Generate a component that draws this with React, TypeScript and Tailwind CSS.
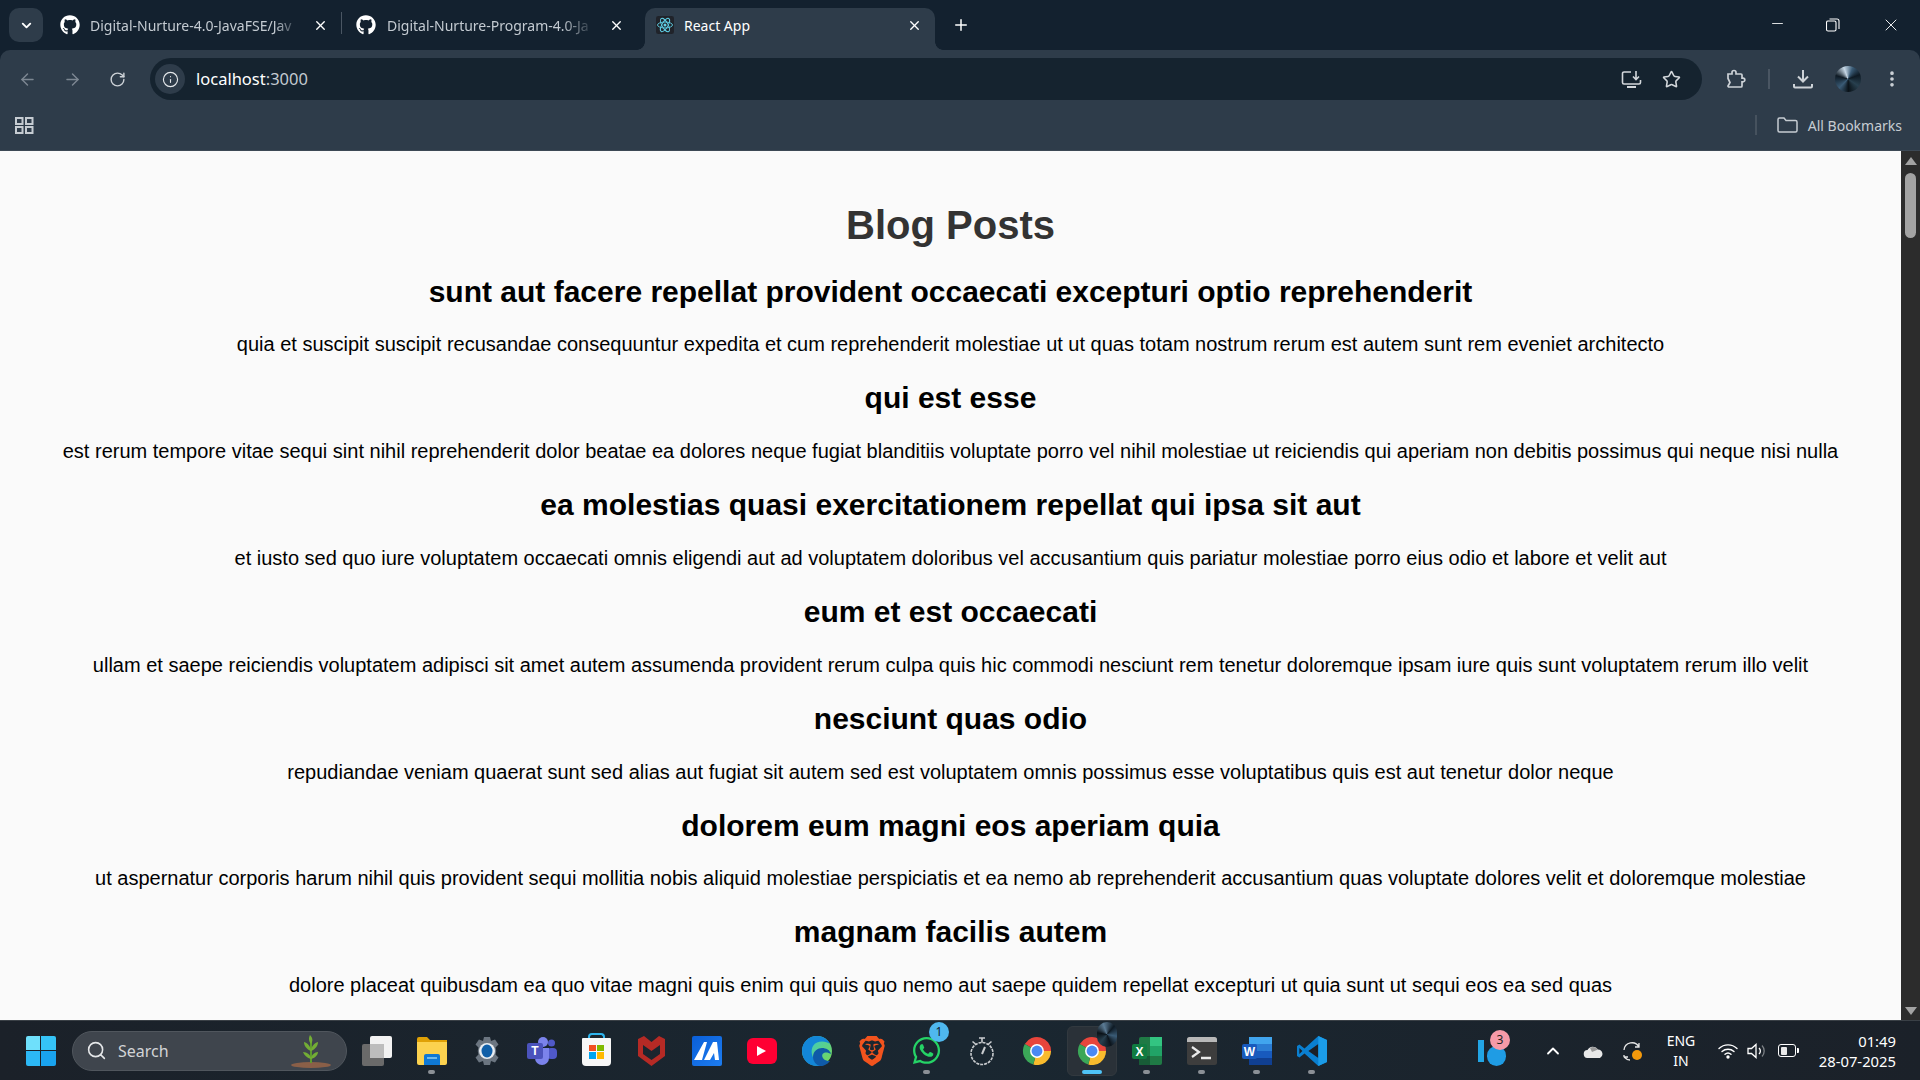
import React from "react";
import { ArrowLeft, ArrowRight, RotateCw, Info, Star, MoreVertical, X, Plus, ChevronDown, ChevronUp, Minus, Search } from "lucide-react";
import { FaGithub, FaWhatsapp } from "react-icons/fa";
import { SiBrave } from "react-icons/si";

const posts = [
  ["sunt aut facere repellat provident occaecati excepturi optio reprehenderit", "quia et suscipit suscipit recusandae consequuntur expedita et cum reprehenderit molestiae ut ut quas totam nostrum rerum est autem sunt rem eveniet architecto"],
  ["qui est esse", "est rerum tempore vitae sequi sint nihil reprehenderit dolor beatae ea dolores neque fugiat blanditiis voluptate porro vel nihil molestiae ut reiciendis qui aperiam non debitis possimus qui neque nisi nulla"],
  ["ea molestias quasi exercitationem repellat qui ipsa sit aut", "et iusto sed quo iure voluptatem occaecati omnis eligendi aut ad voluptatem doloribus vel accusantium quis pariatur molestiae porro eius odio et labore et velit aut"],
  ["eum et est occaecati", "ullam et saepe reiciendis voluptatem adipisci sit amet autem assumenda provident rerum culpa quis hic commodi nesciunt rem tenetur doloremque ipsam iure quis sunt voluptatem rerum illo velit"],
  ["nesciunt quas odio", "repudiandae veniam quaerat sunt sed alias aut fugiat sit autem sed est voluptatem omnis possimus esse voluptatibus quis est aut tenetur dolor neque"],
  ["dolorem eum magni eos aperiam quia", "ut aspernatur corporis harum nihil quis provident sequi mollitia nobis aliquid molestiae perspiciatis et ea nemo ab reprehenderit accusantium quas voluptate dolores velit et doloremque molestiae"],
  ["magnam facilis autem", "dolore placeat quibusdam ea quo vitae magni quis enim qui quis quo nemo aut saepe quidem repellat excepturi ut quia sunt ut sequi eos ea sed quas"],
];

function ReactIcon() {
  return (
    <svg width="18" height="18" viewBox="0 0 24 24" fill="none" stroke="#5fd0e6" strokeWidth="1.2">
      <rect width="24" height="24" rx="3" fill="#20232a" stroke="none" />
      <circle cx="12" cy="12" r="2" fill="#5fd0e6" stroke="none" />
      <ellipse cx="12" cy="12" rx="10" ry="4" />
      <ellipse cx="12" cy="12" rx="10" ry="4" transform="rotate(60 12 12)" />
      <ellipse cx="12" cy="12" rx="10" ry="4" transform="rotate(120 12 12)" />
    </svg>
  );
}

function TabBar() {
  return (
    <div className="h-[50px] flex items-end bg-[#13212f] text-[14px] shrink-0">
      <div className="w-[34px] h-[34px] ml-[9px] mb-[8px] rounded-[10px] bg-[#2e3c4a] flex items-center justify-center text-white">
        <ChevronDown size={15} strokeWidth={3} />
      </div>
      <div className="w-[300px] h-[42px] flex items-center pl-[17px] pb-[8px] text-[#c3cad1] relative">
        <FaGithub size={20} className="text-white shrink-0" />
        <span className="ml-[10px] w-[210px] overflow-hidden whitespace-nowrap [mask-image:linear-gradient(to_right,black_88%,transparent)]">Digital-Nurture-4.0-JavaFSE/Jav</span>
        <X size={15} strokeWidth={2.2} className="ml-[13px] text-white shrink-0" />
        <div className="absolute right-[1px] top-[4px] w-[1px] h-[22px] bg-[#4a5663]" />
      </div>
      <div className="w-[302px] h-[42px] flex items-center pl-[13px] pb-[8px] text-[#c3cad1]">
        <FaGithub size={20} className="text-white shrink-0" />
        <span className="ml-[11px] w-[208px] overflow-hidden whitespace-nowrap [mask-image:linear-gradient(to_right,black_84%,transparent)]">Digital-Nurture-Program-4.0-Ja</span>
        <X size={15} strokeWidth={2.2} className="ml-[14px] text-white shrink-0" />
      </div>
      <div className="w-[290px] h-[42px] flex items-center pl-[11px] pb-[8px] bg-[#2e3c4a] rounded-t-[10px] text-white relative">
        <div className="absolute left-[-8px] bottom-0 w-[8px] h-[8px] bg-[radial-gradient(circle_at_0_0,transparent_7.5px,#2e3c4a_8px)]" />
        <div className="absolute right-[-8px] bottom-0 w-[8px] h-[8px] bg-[radial-gradient(circle_at_100%_0,transparent_7.5px,#2e3c4a_8px)]" />
        <ReactIcon />
        <span className="ml-[10px] flex-1 whitespace-nowrap">React App</span>
        <X size={15} strokeWidth={2.2} className="mr-[13px] text-white shrink-0" />
      </div>
      <div className="h-[42px] flex items-center pb-[8px] ml-[17px] text-white">
        <Plus size={18} strokeWidth={2} />
      </div>
      <div className="ml-auto h-[50px] flex items-center text-white">
        <Minus size={17} strokeWidth={1.2} className="mr-[40px] mb-[4px]" />
        <svg width="14" height="14" viewBox="0 0 14 14" fill="none" stroke="white" strokeWidth="1.1" className="mr-[41px]">
          <rect x="0.5" y="3" width="9.5" height="10" rx="1.5" />
          <path d="M3.5 1h7.5a2 2 0 0 1 2 2v8" />
        </svg>
        <X size={20} strokeWidth={1.1} className="mr-[19px]" />
      </div>
    </div>
  );
}

function Toolbar() {
  return (
    <div className="bg-[#2e3c4a] shrink-0 h-[101px] rounded-tr-[10px] rounded-tl-[10px] border-b border-[#3c4854]">
      <div className="h-[50px] flex items-start pt-[8px]">
        <div className="h-[42px] flex items-center pl-[18px] text-[#7d8792]">
          <ArrowLeft size={19} strokeWidth={1.8} />
          <ArrowRight size={19} strokeWidth={1.8} className="ml-[26px]" />
          <RotateCw size={17} strokeWidth={2} className="ml-[27px] text-[#cdd2d7]" />
        </div>
        <div className="ml-[24px] h-[42px] w-[1552px] rounded-full bg-[#15232f] flex items-center pl-[5px] pr-[21px]">
          <div className="w-[30px] h-[30px] rounded-full bg-[#2e3c4a] flex items-center justify-center text-[#e4e7ea]">
            <Info size={17} strokeWidth={1.6} />
          </div>
          <span className="ml-[11px] text-[16.5px] text-white font-['Noto_Sans',sans-serif]">localhost<span className="text-[#c3cad1]">:3000</span></span>
          <svg width="21" height="20" viewBox="0 0 21 20" fill="none" stroke="#d3d7db" strokeWidth="1.6" className="ml-auto">
            <path d="M10 3H3a1.5 1.5 0 0 0-1.5 1.5v9A1.5 1.5 0 0 0 3 15h15a1.5 1.5 0 0 0 1.5-1.5V11" />
            <path d="M6 18h9" strokeWidth="2" />
            <path d="M15 2v8M12 7.5l3 3 3-3" />
          </svg>
          <Star size={19} strokeWidth={2} className="ml-[20px] text-[#d3d7db]" />
        </div>
        <div className="h-[42px] flex items-center text-[#cdd2d7]">
          <svg width="20" height="20" viewBox="0 0 20 20" fill="none" stroke="#cdd2d7" strokeWidth="1.7" className="ml-[24px]">
            <path d="M2 5h4V3.5a2 2 0 0 1 4 0V5h5a1 1 0 0 1 1 1v3.2h1a1.8 1.8 0 0 1 0 3.6h-1V17a1 1 0 0 1-1 1H3a1 1 0 0 1-1-1l2-3.5L2 9.5z" />
          </svg>
          <div className="w-[2px] h-[20px] bg-[#4a5663] ml-[22px]" />
          <svg width="22" height="22" viewBox="0 0 22 22" fill="none" stroke="#cdd2d7" strokeWidth="2" className="ml-[22px]">
            <path d="M11 2v11M6 8.5l5 5 5-5" />
            <path d="M2 16v2.5a1 1 0 0 0 1 1h16a1 1 0 0 0 1-1V16" />
          </svg>
          <div className="w-[26px] h-[26px] rounded-full ml-[21px] bg-[conic-gradient(from_-20deg,#c7d8e6,#3a5b76_12%,#0e1a24_25%,#28404f_40%,#0a1218_55%,#3a5b76_68%,#0e1a24_85%,#c7d8e6)]" />
          <MoreVertical size={20} strokeWidth={2.4} className="ml-[21px]" />
        </div>
      </div>
      <div className="h-[50px] flex items-center pl-[15px] pr-[18px] text-[#c6ccd2]">
        <svg width="19" height="17" viewBox="0 0 19 17" fill="none" stroke="#c6ccd2" strokeWidth="2">
          <rect x="1" y="1" width="6.5" height="6" />
          <rect x="11" y="1" width="6.5" height="6" />
          <rect x="1" y="10" width="6.5" height="6" />
          <rect x="11" y="10" width="6.5" height="6" />
        </svg>
        <div className="ml-auto w-[2px] h-[20px] bg-[#46525e]" />
        <svg width="21" height="16" viewBox="0 0 21 16" fill="none" stroke="#c6ccd2" strokeWidth="1.5" className="ml-[20px]">
          <path d="M1 2.5A1.5 1.5 0 0 1 2.5 1H7l2 2.5h9.5A1.5 1.5 0 0 1 20 5v8.5a1.5 1.5 0 0 1-1.5 1.5h-16A1.5 1.5 0 0 1 1 13.5z" />
        </svg>
        <span className="ml-[10px] font-['Noto_Sans',sans-serif] text-[14px]">All Bookmarks</span>
      </div>
    </div>
  );
}

function Page() {
  return (
    <div className="flex-1 min-h-0 flex">
      <main className="flex-1 min-w-0 overflow-hidden bg-[#fafafa] pt-[24px] px-[25px] text-center font-['Liberation_Sans',Arial,sans-serif]">
        <h1 className="text-[40px] leading-[46px] font-bold text-[#333333] my-[26.8px]">Blog Posts</h1>
        {posts.map(([t, b]) => (
          <div key={t}>
            <h2 className="text-[30px] leading-[34px] font-bold text-black my-[24.9px]">{t}</h2>
            <p className="text-[20px] leading-[23px] text-black my-[20px]">{b}</p>
          </div>
        ))}
      </main>
      <div className="w-[19px] bg-[#2c2c2c] flex flex-col items-center shrink-0">
        <div className="mt-[6px] w-0 h-0 border-l-[6.5px] border-r-[6.5px] border-b-[8px] border-l-transparent border-r-transparent border-b-[#a3a3a3]" />
        <div className="mt-[8px] w-[11px] h-[65px] rounded-full bg-[#a3a3a3]" />
        <div className="mt-auto mb-[5px] w-0 h-0 border-l-[6.5px] border-r-[6.5px] border-t-[8px] border-l-transparent border-r-transparent border-t-[#a3a3a3]" />
      </div>
    </div>
  );
}

function Chrome({ size = 30 }: { size?: number }) {
  return (
    <svg width={size} height={size} viewBox="0 0 32 32">
      <path d="M16 16 L3 8.5 A15 15 0 0 1 31 16 Z" fill="#e8453c" />
      <path d="M16 16 L31 16 A15 15 0 0 1 12 30.5 Z" fill="#f9bb2d" />
      <path d="M16 16 L12 30.5 A15 15 0 0 1 3 8.5 Z" fill="#3ba758" />
      <circle cx="16" cy="16" r="7.4" fill="#fff" />
      <circle cx="16" cy="16" r="5.8" fill="#4a89f3" />
    </svg>
  );
}

function Slot({ children, dot, active }: { children: React.ReactNode; dot?: boolean; active?: boolean }) {
  return (
    <div className="w-[55px] h-[50px] relative flex items-center justify-center shrink-0">
      {active && <div className="absolute left-[3px] right-[2px] top-0 bottom-0 rounded-[6px] bg-[#2a3138] border border-[#32393f]" />}
      <div className="relative flex items-center justify-center">{children}</div>
      {dot && <div className="absolute left-[24px] bottom-[2px] w-[7px] h-[4px] rounded-full bg-[#8b9096]" />}
      {active && <div className="absolute left-[18px] bottom-[2px] w-[20px] h-[4px] rounded-full bg-[#4fc3f7]" />}
    </div>
  );
}

function Taskbar() {
  return (
    <div className="h-[60px] shrink-0 border-t border-[#3a4046] bg-[linear-gradient(to_right,#1b2129,#1a2731_50%,#1b2129)] flex items-center text-white font-['Noto_Sans',sans-serif]">
      <div className="ml-[13px] w-[55px] flex items-center justify-center">
        <div className="w-[30px] h-[30px] grid grid-cols-2 grid-rows-2 gap-[1.5px]">
          <div className="rounded-tl-[2px] bg-[#6fe0fb]" />
          <div className="rounded-tr-[2px] bg-[#35c3f6]" />
          <div className="rounded-bl-[2px] bg-[#2cb8f5]" />
          <div className="rounded-br-[2px] bg-[#19a3ef]" />
        </div>
      </div>
      <div className="ml-[4px] w-[275px] h-[40px] rounded-full bg-[#3f454d] border border-[#50565d] flex items-center pl-[13px] pr-[12px]">
        <Search size={21} strokeWidth={1.8} className="text-[#e5e7e9]" />
        <span className="ml-[11px] text-[16px] text-[#d2d4d6]">Search</span>
        <svg width="46" height="34" viewBox="0 0 46 34" className="ml-auto">
          <ellipse cx="23" cy="31" rx="20" ry="3" fill="#8a5f48" />
          <path d="M23 29 V8" stroke="#5e9a2f" strokeWidth="2" />
          <path d="M23 10 C20 6 21 3 22 1 C25 4 25 7 23 10Z M23 17 C18 15 16 11 16 8 C20 9 23 13 23 17Z M23 17 C28 15 30 11 30 8 C26 9 23 13 23 17Z M23 25 C19 24 16 21 15 18 C19 18 23 21 23 25Z M23 25 C27 24 30 21 30 18 C27 18 23 21 23 25Z" fill="#73ad35" />
        </svg>
      </div>
      <div className="ml-[2px] flex items-center">
        <Slot>
          <div className="relative w-[30px] h-[30px]">
            <div className="absolute left-0 bottom-0 w-[22px] h-[22px] rounded-[2px] bg-[#6a6a6a]" />
            <div className="absolute right-0 top-0 w-[22px] h-[22px] rounded-[2px] bg-[#f2f2f2]" />
            <div className="absolute left-[8px] top-[8px] w-[14px] h-[14px] bg-[#bdbdbd]" />
          </div>
        </Slot>
        <Slot dot>
          <svg width="30" height="28" viewBox="0 0 30 28">
            <path d="M0 2a2 2 0 0 1 2-2h8l3 3h17v6H0z" fill="#e0a106" />
            <path d="M0 5h30v21a2 2 0 0 1-2 2H2a2 2 0 0 1-2-2z" fill="#fcd24f" />
            <path d="M7 19a2 2 0 0 1 2-2h12a2 2 0 0 1 2 2v9H7z" fill="#0f78d4" />
            <path d="M10 21h10" stroke="#8fd0f5" strokeWidth="1.5" />
          </svg>
        </Slot>
        <Slot>
          <svg width="30" height="30" viewBox="0 0 30 30">
            <path d="M12 1h6l1 4 4-1.500 3.500 5-3 3a9 9 0 0 1 0 7l3 3-3.500 5-4-1.500-1 4h-6l-1-4-4 1.500-3.500-5 3-3a9 9 0 0 1 0-7l-3-3L7 3.500 11 5z" fill="#6b7580" />
            <circle cx="15" cy="15" r="8" fill="#e8edf1" />
            <ellipse cx="15" cy="15" rx="5.500" ry="6.500" fill="#0f5fa8" />
          </svg>
        </Slot>
        <Slot>
          <svg width="30" height="28" viewBox="0 0 30 28">
            <circle cx="24.500" cy="6" r="3.500" fill="#5059c9" />
            <rect x="20" y="11" width="10" height="11" rx="4" fill="#5059c9" />
            <circle cx="16" cy="5" r="5" fill="#7b83eb" />
            <path d="M8 11h14v10a7 7 0 0 1-14 0z" fill="#7b83eb" />
            <rect x="0" y="6" width="16" height="16" rx="2" fill="#4b53bc" />
            <text x="8" y="18" textAnchor="middle" fontSize="12" fontWeight="700" fill="white" fontFamily="Liberation Sans">T</text>
          </svg>
        </Slot>
        <Slot>
          <div className="relative w-[29px] h-[33px] mt-[-3px]">
            <div className="absolute left-[6px] top-0 w-[17px] h-[10px] border-[2px] border-b-0 border-[#2fb5ee] rounded-t-[4px]" />
            <div className="absolute left-0 top-[5px] w-[29px] h-[28px] rounded-b-[4px] rounded-t-[1px] bg-[#f7f7f7] grid grid-cols-2 gap-[1px] p-[7px]">
              <div className="bg-[#f25022]" />
              <div className="bg-[#7fba00]" />
              <div className="bg-[#00a4ef]" />
              <div className="bg-[#ffb900]" />
            </div>
          </div>
        </Slot>
        <Slot>
          <svg width="27" height="31" viewBox="0 0 27 31">
            <path fillRule="evenodd" d="M0 4 L6 1 L13.500 7 L21 1 L27 4 V21 L13.500 31 L0 21Z M5 10 V19 L13.500 25 L22 19 V10 L13.500 16Z" fill="#b52a25" />
          </svg>
        </Slot>
        <Slot>
          <div className="w-[30px] h-[30px] rounded-[2px] bg-[linear-gradient(135deg,#0a5fd8,#1d7df0)] flex items-center justify-center overflow-hidden">
            <svg width="26" height="18" viewBox="0 0 26 18" fill="white">
              <path d="M0 18 L10 0 H13 L8 18Z M10 18 L19 0 H23 L25 18 H21 L20 11 L16 18Z" />
            </svg>
          </div>
        </Slot>
        <Slot>
          <div className="w-[30px] h-[26px] rounded-[6px] bg-[#ff0033] flex items-center justify-center">
            <div className="w-0 h-0 border-t-[5px] border-b-[5px] border-l-[9px] border-t-transparent border-b-transparent border-l-white" />
          </div>
        </Slot>
        <Slot>
          <svg width="30" height="30" viewBox="0 0 30 30">
            <defs>
              <linearGradient id="edgeA" x1="0" y1="0" x2="1" y2="1">
                <stop offset="0" stopColor="#31c6d9" />
                <stop offset="1" stopColor="#7bd84e" />
              </linearGradient>
            </defs>
            <circle cx="15" cy="15" r="15" fill="url(#edgeA)" />
            <path d="M0 15C0 6 7 0 15 0c7 0 11 4 13 8-4-3-13-4-17 2-3 5-1 13 5 17 2 1 4 2 6 2-2 1-5 1-7 1C7 30 0 24 0 15z" fill="#1386d8" />
            <path d="M11 21c0-6 5-9 9-9 4 0 8 2 9 6-2-1-5-2-7-1-3 1-2 5 1 7 2 1 4 1 5 1-3 4-7 5-10 5-4-1-7-5-7-9z" fill="#0f5aa8" />
          </svg>
        </Slot>
        <Slot>
          <SiBrave size={30} className="text-[#f2531d]" />
        </Slot>
        <Slot dot>
          <FaWhatsapp size={31} className="text-[#25d366]" />
          <div className="absolute right-[-7px] top-[-13px] w-[20px] h-[20px] rounded-full bg-[#4fb8ef] text-[#10202c] text-[12px] flex items-center justify-center">1</div>
        </Slot>
        <Slot>
          <svg width="26" height="30" viewBox="0 0 26 30" fill="none" stroke="#c9cccf" strokeWidth="1.6">
            <circle cx="13" cy="17.500" r="11" strokeDasharray="3 1" />
            <path d="M10 2h6M13 2v4.500M3.500 5.500l3 2.500M22.500 5.500l-3 2.500" />
            <path d="M13 18l3-7" strokeWidth="2" />
          </svg>
        </Slot>
        <Slot>
          <Chrome />
        </Slot>
        <Slot active>
          <Chrome />
          <div className="absolute right-[-10px] top-[-14px] w-[20px] h-[25px] rounded-full bg-[conic-gradient(from_40deg,#0e1a24,#3a5b76,#0c151d,#28404f,#0a1218,#5b7b95,#0e1a24)]" />
        </Slot>
        <Slot dot>
          <svg width="30" height="28" viewBox="0 0 30 28">
            <rect x="7" width="23" height="28" rx="2" fill="#1f7a45" />
            <rect x="18" width="12" height="9" fill="#33c481" />
            <rect x="18" y="9" width="12" height="10" fill="#21a366" />
            <rect x="7" y="19" width="11" height="9" fill="#185c37" />
            <rect x="0" y="7" width="15" height="15" rx="2" fill="#107c41" />
            <text x="7.500" y="18.500" textAnchor="middle" fontSize="12" fontWeight="700" fill="white" fontFamily="Liberation Sans">X</text>
          </svg>
        </Slot>
        <Slot dot>
          <svg width="30" height="28" viewBox="0 0 30 28">
            <rect width="30" height="28" rx="2.500" fill="#3d3d3d" />
            <path d="M0 2.500A2.500 2.500 0 0 1 2.500 0h25A2.500 2.500 0 0 1 30 2.500V5H0z" fill="#b8b8b8" />
            <path d="M5 10l7 5-7 5" fill="none" stroke="#eaeaea" strokeWidth="2.200" />
            <path d="M14 21h10" stroke="#eaeaea" strokeWidth="2.500" />
          </svg>
        </Slot>
        <Slot dot>
          <svg width="30" height="28" viewBox="0 0 30 28">
            <rect x="7" width="23" height="28" rx="2" fill="#2b7cd3" />
            <rect x="7" width="23" height="7" fill="#41a5ee" />
            <rect x="7" y="14" width="23" height="7" fill="#185abd" />
            <rect x="7" y="21" width="23" height="7" fill="#103f91" />
            <rect x="0" y="7" width="15" height="15" rx="2" fill="#185abd" />
            <text x="7.500" y="18.500" textAnchor="middle" fontSize="12" fontWeight="700" fill="white" fontFamily="Liberation Sans">W</text>
          </svg>
        </Slot>
        <Slot dot>
          <svg width="30" height="30" viewBox="0 0 100 100">
            <path d="M71 0 L100 13 V87 L71 100 L25 58 L8 72 L0 67 V33 L8 28 L25 42Z" fill="#0a7fd0" />
            <path d="M71 27 V73 L38 50Z" fill="#1b1f26" />
            <path d="M71 0 L100 13 V87 L71 100Z" fill="#1b9ce8" />
            <path d="M8 40 V60 L18 50Z" fill="#1b1f26" />
          </svg>
        </Slot>
      </div>
      <div className="ml-auto mr-[24px] w-[424px] flex items-center text-[14px]">
        <div className="w-[40px] h-[50px] relative">
          <div className="absolute left-[6px] top-[14px] w-[6px] h-[22px] bg-[#22a5e5]" />
          <div className="absolute left-[15px] top-[20px] w-[19px] h-[20px] rounded-full bg-[#1f9ce4]" />
          <div className="absolute left-[18px] top-[4px] w-[20px] h-[20px] rounded-full bg-[#f79aa8] text-[#222] text-[12px] flex items-center justify-center">3</div>
        </div>
        <div className="ml-[21px] w-[40px] flex justify-center">
          <ChevronUp size={20} strokeWidth={2.2} />
        </div>
        <div className="w-[40px] flex justify-center">
          <svg width="21" height="14" viewBox="0 0 21 14">
            <path d="M5 14a4 4 0 0 1-.5-8A6 6 0 0 1 15 5.500 4.500 4.500 0 0 1 17 14z" fill="#e8e8e8" />
            <path d="M7 4a6 6 0 0 1 8 1.500L9 8z" fill="#9a9a9a" />
          </svg>
        </div>
        <div className="w-[38px] flex justify-center">
          <svg width="21" height="20" viewBox="0 0 21 20" fill="none" stroke="#e6e6e6" strokeWidth="1.300">
            <path d="M2 9a8 8 0 0 1 15-3M17 2v4h-4" />
            <path d="M2 16h4M2 16v-2M2 16c2 2 4 3 6 3" />
            <circle cx="15" cy="14" r="5" fill="#f59a0c" stroke="none" />
          </svg>
        </div>
        <div className="w-[60px] text-center leading-[20px] text-[14px]">
          <div>ENG</div>
          <div>IN</div>
        </div>
        <div className="ml-[2px] w-[30px] flex justify-center">
          <svg width="20" height="16" viewBox="0 0 20 16" fill="none" stroke="white" strokeWidth="1.400" strokeLinecap="round">
            <path d="M1 5.500a13 13 0 0 1 18 0M4 8.500a9 9 0 0 1 12 0M7 11.300a4.500 4.500 0 0 1 6 0" />
            <circle cx="10" cy="14" r="1" fill="white" />
          </svg>
        </div>
        <div className="w-[28px] flex justify-center">
          <svg width="20" height="16" viewBox="0 0 20 16" fill="none" stroke="white" strokeWidth="1.300">
            <path d="M1 5.500h3.500L9 1.500v13l-4.500-4H1z" />
            <path d="M12 5a4 4 0 0 1 0 6" />
            <path d="M15 2.500a8 8 0 0 1 0 11" stroke="#7b7f84" />
          </svg>
        </div>
        <div className="w-[32px] flex justify-center">
          <div className="w-[18px] h-[13px] rounded-[3px] border border-white p-[1.5px] relative">
            <div className="w-[6px] h-full bg-[#e8e8e8] rounded-[1px]" />
            <div className="absolute right-[-3.500px] top-[3px] w-[2px] h-[5px] bg-white rounded-r-[1px]" />
          </div>
        </div>
        <div className="flex-1 text-right leading-[20px] text-[14.8px]">
          <div>01:49</div>
          <div>28-07-2025</div>
        </div>
      </div>
    </div>
  );
}

export default function App() {
  return (
    <div className="w-screen h-screen overflow-hidden flex flex-col bg-[#13212f] font-['Noto_Sans',sans-serif]">
      <TabBar />
      <Toolbar />
      <Page />
      <Taskbar />
    </div>
  );
}
